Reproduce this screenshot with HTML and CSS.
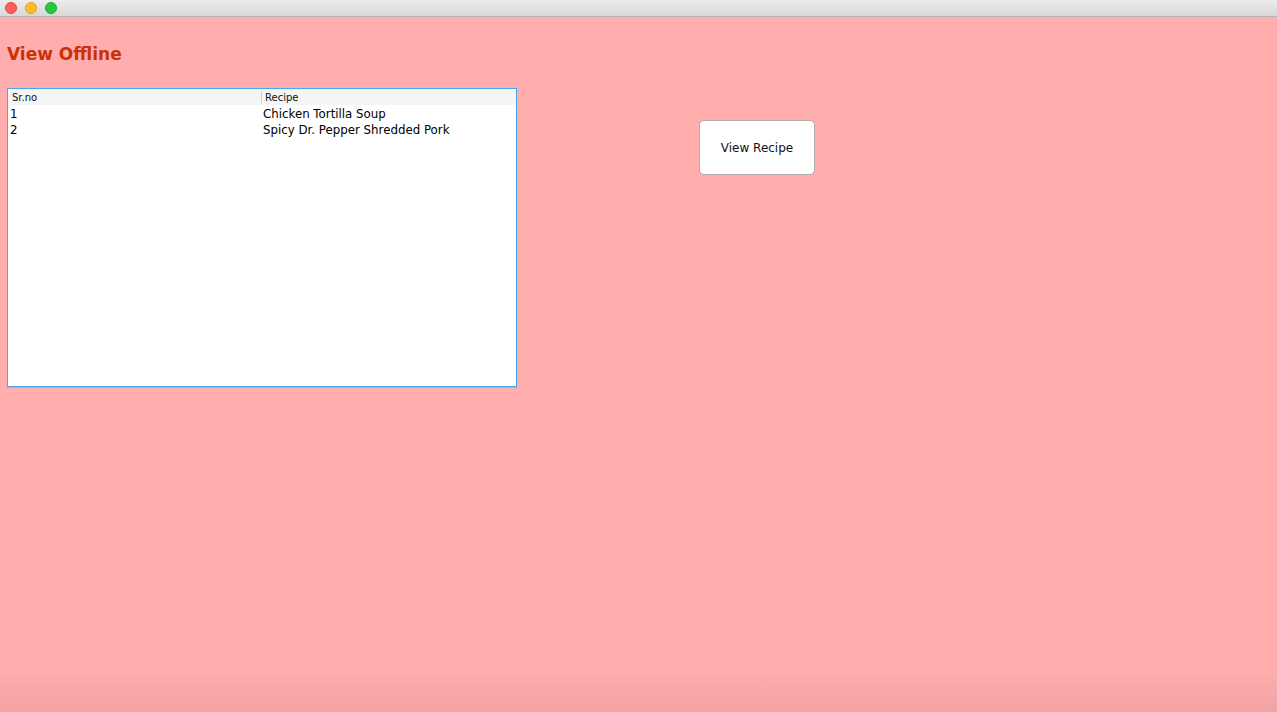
FILE: index.html
```html
<!DOCTYPE html>
<html>
<head>
<meta charset="utf-8">
<link rel="stylesheet" href="styles.css">
</head>
<body>
<div class="window">
  <div class="titlebar">
    <span class="light red"></span>
    <span class="light yellow"></span>
    <span class="light green"></span>
  </div>
  <div class="content">
    <h1 class="title">View Offline</h1>
    <div class="main">
      <div class="table">
        <div class="thead">
          <div class="th th-first">Sr.no</div>
          <div class="th th-second">Recipe</div>
        </div>
        <div class="tbody">
          <div class="row">
            <div class="td td-first">1</div>
            <div class="td td-second">Chicken Tortilla Soup</div>
          </div>
          <div class="row">
            <div class="td td-first">2</div>
            <div class="td td-second">Spicy Dr. Pepper Shredded Pork</div>
          </div>
        </div>
      </div>
      <button class="btn">View Recipe</button>
    </div>
  </div>
  <div class="bottom-shade"></div>
</div>
</body>
</html>
```
FILE: styles.css
```css
html, body {
  margin: 0;
  padding: 0;
  width: 1277px;
  height: 712px;
  overflow: hidden;
}
body {
  font-family: "DejaVu Sans", "Liberation Sans", sans-serif;
  background: #ffadad;
}
.window {
  position: relative;
  width: 1277px;
  height: 712px;
  display: flex;
  flex-direction: column;
}
.titlebar {
  height: 16px;
  background: linear-gradient(#ececec, #d8d8d8);
  border-bottom: 1px solid #b4b4b4;
  display: flex;
  align-items: center;
  gap: 8px;
  padding-left: 5px;
}
.light {
  width: 12px;
  height: 12px;
  border-radius: 50%;
  box-sizing: border-box;
}
.red { background: #fe5f57; border: 1px solid #e0443e; }
.yellow { background: #febc2e; border: 1px solid #dea123; }
.green { background: #28c840; border: 1px solid #1aab29; }
.content {
  flex: 1;
  padding: 0 7px;
}
.title {
  margin: 27px 0 0 0;
  height: 44px;
  font-size: 17px;
  font-weight: bold;
  color: #c93205;
  line-height: 20px;
}
.main {
  display: flex;
  align-items: flex-start;
}
.table {
  width: 508px;
  height: 297px;
  background: #fff;
  border: 1px solid #4aa8ee;
  box-shadow: 0 1px 0 #7fc0ef;
  flex: none;
}
.thead {
  display: flex;
  height: 16px;
  background: #f5f5f5;
  font-size: 10px;
  color: #111;
}
.th-first {
  width: 249px;
  padding-left: 4px;
  border-right: 1px solid #d0d0d0;
  margin: 2px 0;
  line-height: 14px;
}
.th-second {
  padding-left: 3px;
  line-height: 18px;
}
.tbody {
  padding-top: 1px;
}
.row {
  display: flex;
  height: 16px;
  font-size: 11.8px;
  line-height: 16px;
  color: #000;
}
.td-first {
  width: 252px;
  padding-left: 2px;
}
.td-second {
  padding-left: 1px;
}
.btn {
  margin: 32px 0 0 182px;
  width: 116px;
  height: 55px;
  background: #fff;
  border: 1px solid #b8a8a8;
  border-radius: 5px;
  font-family: "DejaVu Sans", "Liberation Sans", sans-serif;
  font-size: 12px;
  color: #111;
  padding: 0;
}
.bottom-shade {
  position: absolute;
  left: 0;
  right: 0;
  bottom: 0;
  height: 40px;
  background: linear-gradient(rgba(200,130,130,0), rgba(200,130,130,0.25));
  pointer-events: none;
}
```
